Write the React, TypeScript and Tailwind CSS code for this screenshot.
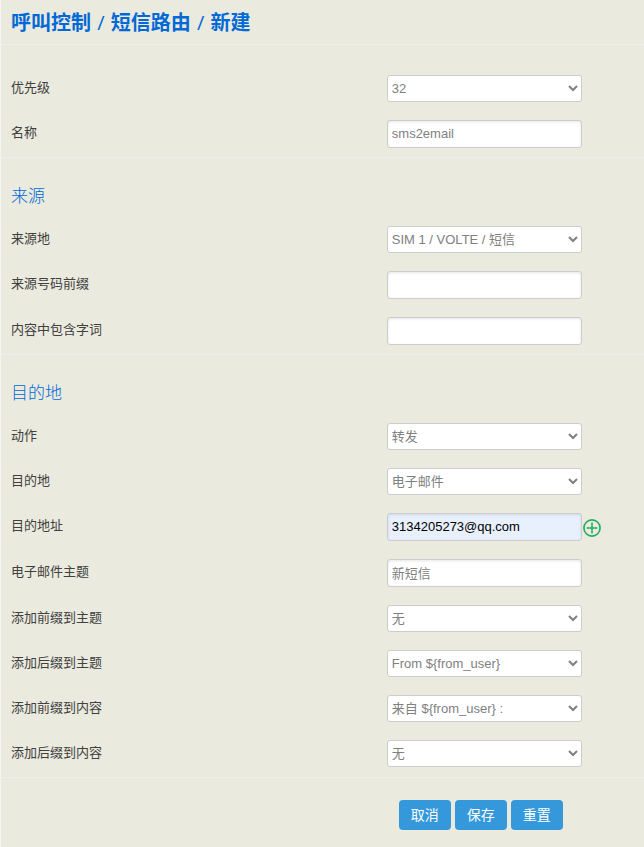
import type { ReactNode } from "react";

const priorities = ["32", "31", "30"];
const sources = ["SIM 1 / VOLTE / 短信"];
const actions = ["转发"];
const destinations = ["电子邮件"];
const variables = ["无", "From ${from_user}", "来自 ${from_user} :"];

function Row({ id, label, children }: { id: string; label: string; children: ReactNode }) {
  return (
    <div className="flex items-center py-[9px]">
      <label htmlFor={id} className="w-3/5 shrink-0 pl-[10px] leading-[18px] pb-[2px]">
        {label}
      </label>
      <div className="flex items-center">{children}</div>
    </div>
  );
}

function SelectRow({ id, label, options, value }: { id: string; label: string; options: string[]; value: string }) {
  return (
    <Row id={id} label={label}>
      <select
        id={id}
        defaultValue={value}
        className="block h-[27px] w-[195px] rounded-[3px] border border-[#ccc] bg-white text-[13px] text-[#808080]"
      >
        {options.map((option) => (
          <option key={option}>{option}</option>
        ))}
      </select>
    </Row>
  );
}

function InputRow({ id, label, value = "", filled = false, children }: { id: string; label: string; value?: string; filled?: boolean; children?: ReactNode }) {
  return (
    <Row id={id} label={label}>
      <input
        id={id}
        type="text"
        defaultValue={value}
        className={`block h-[28px] w-[195px] rounded-[3px] border border-[#ccc] px-[4px] pb-[2px] text-[13px] shadow-[inset_0_1px_3px_rgba(0,0,0,0.1)] ${
          filled ? "bg-[#e8f0fe] text-black" : "bg-white text-[#808080]"
        }`}
      />
      {children}
    </Row>
  );
}

function SectionTitle({ children }: { children: ReactNode }) {
  return <h2 className="px-[10px] pt-[26px] pb-[7px] text-[17px] leading-[26px] font-light text-[#0069d6]">{children}</h2>;
}

function ActionButton({ children }: { children: ReactNode }) {
  return (
    <button type="button" className="h-[30px] rounded-[4px] bg-[#3498db] px-[12px] text-[14px] leading-[20px] text-white">
      {children}
    </button>
  );
}

export default function App() {
  return (
    <form className="min-h-screen border-l border-[#f4f4f0] bg-[#eaeade] font-['Liberation_Sans','Noto_Sans_CJK_SC',sans-serif] text-[13px] text-[#404040]">
      <header className="border-b border-[#eee] px-[10px] pt-[8px] pb-[6px]">
        <h1 className="font-['Open_Sans','Noto_Sans_CJK_SC',sans-serif] text-[20px] leading-[30px] font-bold text-[#0069d6]">
          呼叫控制 <span className="mx-px font-medium">/</span> 短信路由 <span className="mx-px font-medium">/</span> 新建
        </h1>
      </header>

      <section className="border-b border-[#eee] pt-[21px]">
        <SelectRow id="priority" label="优先级" options={priorities} value="32" />
        <InputRow id="name" label="名称" value="sms2email" />
      </section>

      <section className="border-b border-[#eee]">
        <SectionTitle>来源</SectionTitle>
        <SelectRow id="source" label="来源地" options={sources} value={sources[0]} />
        <InputRow id="source-prefix" label="来源号码前缀" />
        <InputRow id="content-words" label="内容中包含字词" />
      </section>

      <section className="border-b border-[#eee] pb-px">
        <SectionTitle>目的地</SectionTitle>
        <SelectRow id="action" label="动作" options={actions} value={actions[0]} />
        <SelectRow id="destination" label="目的地" options={destinations} value={destinations[0]} />
        <InputRow id="address" label="目的地址" value="3134205273@qq.com" filled>
          <button type="button" aria-label="添加" className="mt-[2px] ml-px">
            <svg viewBox="0 0 18 18" className="h-[18px] w-[18px]" fill="none" stroke="#1fae5e">
              <circle cx="9" cy="9" r="8.1" strokeWidth="1.6" />
              <path d="M9 3.6v10.8M3.6 9h10.8" strokeWidth="1.5" />
            </svg>
          </button>
        </InputRow>
        <InputRow id="subject" label="电子邮件主题" value="新短信" />
        <SelectRow id="subject-prefix" label="添加前缀到主题" options={variables} value={variables[0]} />
        <SelectRow id="subject-suffix" label="添加后缀到主题" options={variables} value={variables[1]} />
        <SelectRow id="content-prefix" label="添加前缀到内容" options={variables} value={variables[2]} />
        <SelectRow id="content-suffix" label="添加后缀到内容" options={variables} value={variables[0]} />
      </section>

      <div className="ml-[60%] flex gap-[4px] py-[22px] pl-[12px]">
        <ActionButton>取消</ActionButton>
        <ActionButton>保存</ActionButton>
        <ActionButton>重置</ActionButton>
      </div>
    </form>
  );
}
